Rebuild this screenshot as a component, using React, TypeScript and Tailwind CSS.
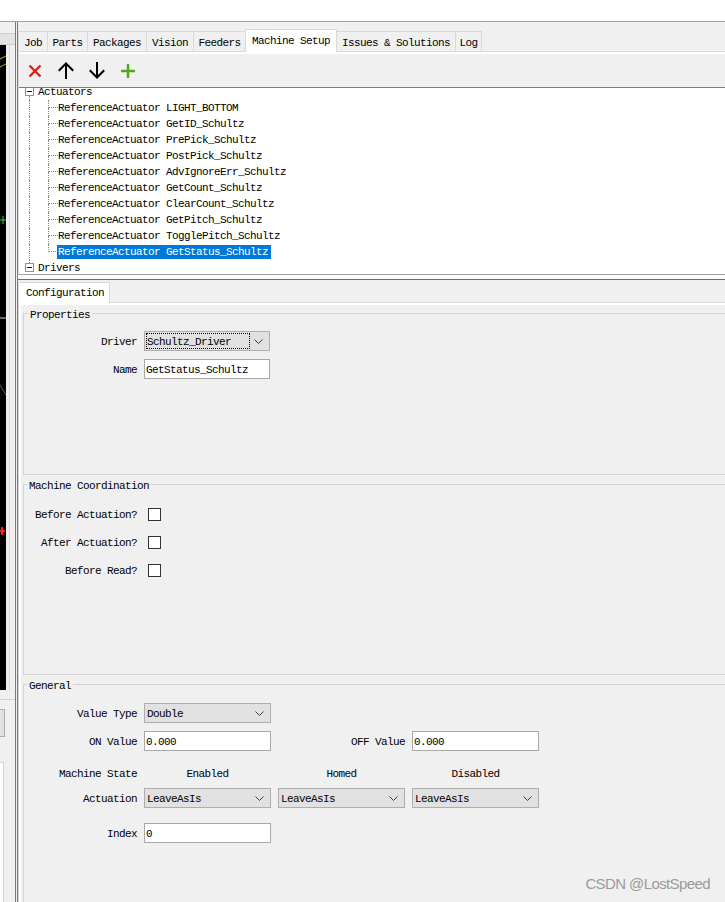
import React from "react";

const tabs = [
  { label: "Job", cls: "w-[29px]" },
  { label: "Parts", cls: "w-[40px]" },
  { label: "Packages", cls: "w-[59px]" },
  { label: "Vision", cls: "w-[47px]" },
  { label: "Feeders", cls: "w-[52px]" },
  { label: "Machine Setup", cls: "w-[92px]", sel: true },
  { label: "Issues & Solutions", cls: "w-[119px] -ml-px" },
  { label: "Log", cls: "w-[27px] border-r" },
];

const children = [
  "LIGHT_BOTTOM",
  "GetID_Schultz",
  "PrePick_Schultz",
  "PostPick_Schultz",
  "AdvIgnoreErr_Schultz",
  "GetCount_Schultz",
  "ClearCount_Schultz",
  "GetPitch_Schultz",
  "TogglePitch_Schultz",
  "GetStatus_Schultz",
];

function Chevron() {
  return (
    <svg width="9" height="5" viewBox="0 0 9 5" className="shrink-0">
      <path d="M0.5 0.5 L4.5 4.5 L8.5 0.5" fill="none" stroke="#3c3c3c" strokeWidth="1" />
    </svg>
  );
}

function Combo({ value, w, focus }: { value: string; w: string; focus?: boolean }) {
  return (
    <div className={`${w} h-[20px] shrink-0 border border-[#adadad] bg-[#e1e1e1] flex items-center`}>
      {focus ? (
        <div className="ml-[1px] w-[104px] h-[16px] border border-dotted border-black pt-px leading-[14px]">
          {value}
        </div>
      ) : (
        <div className="flex-1 pl-[2px] pt-[2px]">{value}</div>
      )}
      {focus && <div className="flex-1" />}
      <div className="mr-[6px]">
        <Chevron />
      </div>
    </div>
  );
}

function Field({ value, w }: { value: string; w: string }) {
  return (
    <div className={`${w} h-[20px] shrink-0 border border-[#a8a8a8] bg-white flex items-center pl-[1px]`}>
      <div className="pt-[2px]">{value}</div>
    </div>
  );
}

function Label({ text, w }: { text: string; w: string }) {
  return <div className={`${w} shrink-0 text-right pt-[2px] whitespace-pre`}>{text}</div>;
}

function Check() {
  return <div className="w-[13px] h-[13px] border border-[#333333] bg-white shrink-0" />;
}

function ExpandBox() {
  return (
    <div className="w-[9px] h-[9px] border border-[#919191] bg-white flex items-center justify-center shrink-0">
      <div className="w-[5px] h-px bg-[#1a1a1a]" />
    </div>
  );
}

function ChildRow({ name, last }: { name: string; last?: boolean }) {
  return (
    <div className="flex h-[16px]">
      <div className="w-[10px] shrink-0" />
      <div className="w-[19px] shrink-0 border-l border-dotted border-[#8c8c8c]" />
      <div className="w-[10px] shrink-0 flex flex-col">
        <div className="h-[8px] border-l border-b border-dotted border-[#8c8c8c]" />
        {!last && <div className="h-[8px] border-l border-dotted border-[#8c8c8c]" />}
      </div>
      {last ? (
        <span className="self-center h-[14px] leading-[14px] bg-[#0078d7] text-white -ml-px pl-px pr-[3px] whitespace-pre">
          ReferenceActuator {name}
        </span>
      ) : (
        <span className="whitespace-pre">ReferenceActuator {name}</span>
      )}
    </div>
  );
}

function UpIcon() {
  return (
    <svg width="18" height="17" viewBox="0 0 18 17">
      <path d="M9 1.5 V17 M1.8 8.7 L9 1.5 L16.2 8.7" fill="none" stroke="#000" strokeWidth="2" />
    </svg>
  );
}

function DownIcon() {
  return (
    <svg width="18" height="17" viewBox="0 0 18 17">
      <path d="M9 0 V15.5 M1.8 8.3 L9 15.5 L16.2 8.3" fill="none" stroke="#000" strokeWidth="2" />
    </svg>
  );
}

function DeleteIcon() {
  return (
    <svg width="16" height="16" viewBox="0 0 16 16">
      <path d="M2.5 2.5 L13.5 13.5 M13.5 2.5 L2.5 13.5" fill="none" stroke="#dc2020" strokeWidth="2.4" />
    </svg>
  );
}

function AddIcon() {
  return (
    <svg width="16" height="16" viewBox="0 0 16 16">
      <path d="M8 1 V15 M1 8 H15" fill="none" stroke="#4ea61c" strokeWidth="2.4" />
    </svg>
  );
}

function LeftStrip() {
  return (
    <div className="w-[15px] shrink-0 flex flex-col">
      <div className="h-[11px]" />
      <div className="h-[12px] bg-[#e3e3e3] border-t border-b border-[#cfcfcf]" />
      <div className="h-[645px] flex">
        <div className="w-[6px] bg-black">
          <svg width="6" height="645" viewBox="0 0 6 645">
            <path d="M0 14 Q4 12 6 11" stroke="#c8c84a" strokeWidth="1" fill="none" />
            <path d="M0 22 Q4 20 6 19" stroke="#b0b040" strokeWidth="1" fill="none" />
            <path d="M0 175 H6 M3 171 V179" stroke="#30d030" strokeWidth="1" />
            <path d="M0 273 H6" stroke="#d0d0d0" strokeWidth="1" />
            <path d="M0 340 Q3 345 6 350" stroke="#606060" strokeWidth="1" fill="none" />
            <path d="M0 486 H5 M2 482 V490" stroke="#ff2020" strokeWidth="2" />
          </svg>
        </div>
        <div className="w-[3px]" />
        <div className="w-px bg-[#dadada]" />
      </div>
      <div className="h-[10px] border-b border-[#d5d5d5]" />
      <div className="h-[9px]" />
      <div className="h-[28px] w-[5px] bg-[#e1e1e1] border border-l-0 border-[#adadad]" />
      <div className="h-[25px]" />
      <div className="flex-1 w-[4px] bg-white border-t border-r border-[#d5d5d5]" />
    </div>
  );
}

export default function App() {
  return (
    <div className="relative w-[725px] h-[902px] overflow-hidden bg-[#f0f0f0] flex flex-col font-['Liberation_Mono',monospace] text-[11px] leading-[16px] tracking-[-0.6px] text-black">
      <div className="h-[22px] shrink-0 bg-white border-b border-[#a0a0a0]" />
      <div className="flex flex-1 min-h-0">
        <LeftStrip />
        <div className="w-[3px] shrink-0 border-l border-r border-[#7a7a7a]" />
        <div className="flex-1 min-w-0 flex flex-col">
          {/* main tabs */}
          <div className="h-[29px] shrink-0 flex items-end">
            {tabs.map((t) =>
              t.sel ? (
                <div
                  key={t.label}
                  className={`${t.cls} h-[23px] -mb-px relative z-10 bg-white border-l border-r border-t border-[#d9d9d9] text-center pt-[3px] whitespace-pre`}
                >
                  {t.label}
                </div>
              ) : (
                <div
                  key={t.label}
                  className={`${t.cls} h-[20px] border-l border-t border-[#d9d9d9] text-center pt-[3px] whitespace-pre`}
                >
                  {t.label}
                </div>
              )
            )}
          </div>
          {/* upper pane */}
          <div className="shrink-0 border-t border-l border-[#d9d9d9] flex flex-col">
            <div className="h-[2px] bg-white" />
            <div className="h-[33px] flex items-center">
              <div className="w-[31px] h-full flex items-center justify-center">
                <DeleteIcon />
              </div>
              <div className="w-[31px] h-full flex items-center justify-center">
                <UpIcon />
              </div>
              <div className="w-[31px] h-full flex items-center justify-center">
                <DownIcon />
              </div>
              <div className="w-[31px] h-full flex items-center justify-center">
                <AddIcon />
              </div>
            </div>
            <div className="h-[188px] bg-white border-t border-t-[#7c7c7c] border-b border-b-[#a0a0a0] overflow-hidden">
              <div className="-mt-[4px] flex flex-col">
                <div className="flex h-[16px]">
                  <div className="w-[6px] shrink-0" />
                  <div className="w-[9px] shrink-0 flex flex-col">
                    <div className="h-[3px]" />
                    <ExpandBox />
                    <div className="flex-1 ml-[4px] border-l border-dotted border-[#8c8c8c]" />
                  </div>
                  <div className="w-[4px] shrink-0" />
                  <span>Actuators</span>
                </div>
                {children.map((c, i) => (
                  <ChildRow key={c} name={c} last={i === children.length - 1} />
                ))}
                <div className="flex h-[16px]">
                  <div className="w-[6px] shrink-0" />
                  <div className="w-[9px] shrink-0 flex flex-col">
                    <div className="h-[3px] ml-[4px] border-l border-dotted border-[#8c8c8c]" />
                    <ExpandBox />
                  </div>
                  <div className="w-[4px] shrink-0" />
                  <span>Drivers</span>
                </div>
              </div>
            </div>
          </div>
          <div className="h-[4px] shrink-0 bg-[#fafafa]" />
          <div className="h-px shrink-0 bg-[#6d6d6d]" />
          {/* lower pane */}
          <div className="flex-1 min-h-0 flex flex-col">
            <div className="pt-[2px] flex shrink-0">
              <div className="w-[92px] h-[21px] -mb-px relative z-10 bg-white border-l border-r border-t border-[#d9d9d9] pl-[7px] pt-[2px]">
                Configuration
              </div>
            </div>
            <div className="flex-1 border-t border-l border-[#d9d9d9]">
              <div className="h-full border-t-2 border-l-2 border-white pl-[2px] flex flex-col">
                {/* Properties */}
                <fieldset className="h-[170px] shrink-0 border border-r-0 border-[#d5d5d5]">
                  <legend className="ml-[4px] px-[2px] h-[16px] pt-[4px] leading-[12px]">Properties</legend>
                  <div className="pt-[10px] flex flex-col gap-[8px]">
                    <div className="flex items-center gap-[7px]">
                      <Label text="Driver" w="w-[113px]" />
                      <Combo value="Schultz_Driver" w="w-[126px]" focus />
                    </div>
                    <div className="flex items-center gap-[7px]">
                      <Label text="Name" w="w-[113px]" />
                      <Field value="GetStatus_Schultz" w="w-[126px]" />
                    </div>
                  </div>
                </fieldset>
                {/* Machine Coordination */}
                <fieldset className="mt-[1px] h-[199px] shrink-0 border border-r-0 border-[#d5d5d5]">
                  <legend className="ml-[3px] px-[2px] h-[16px] pt-[5px] leading-[11px]">Machine Coordination</legend>
                  <div className="pt-[12px] flex flex-col gap-[8px]">
                    {["Before Actuation?", "After Actuation?", "Before Read?"].map((l) => (
                      <div key={l} className="h-[20px] flex items-center">
                        <Label text={l} w="w-[113px]" />
                        <div className="ml-[11px]">
                          <Check />
                        </div>
                      </div>
                    ))}
                  </div>
                </fieldset>
                {/* General */}
                <fieldset className="mt-[1px] h-[260px] shrink-0 border border-r-0 border-[#d5d5d5]">
                  <legend className="ml-[3px] px-[2px] h-[16px] pt-[5px] leading-[11px]">General</legend>
                  <div className="pt-[11px] flex flex-col">
                    <div className="flex items-center gap-[7px]">
                      <Label text="Value Type" w="w-[113px]" />
                      <Combo value="Double" w="w-[127px]" />
                    </div>
                    <div className="mt-[8px] flex items-center gap-[7px]">
                      <Label text="ON Value" w="w-[113px]" />
                      <Field value="0.000" w="w-[127px]" />
                      <Label text="OFF Value" w="w-[127px]" />
                      <Field value="0.000" w="w-[127px]" />
                    </div>
                    <div className="mt-[12px] h-[20px] flex items-center gap-[7px]">
                      <Label text="Machine State" w="w-[113px]" />
                      <div className="w-[127px] text-center pt-[2px]">Enabled</div>
                      <div className="w-[127px] text-center pt-[2px]">Homed</div>
                      <div className="w-[127px] text-center pt-[2px]">Disabled</div>
                    </div>
                    <div className="mt-[5px] flex items-center gap-[7px]">
                      <Label text="Actuation" w="w-[113px]" />
                      <Combo value="LeaveAsIs" w="w-[127px]" />
                      <Combo value="LeaveAsIs" w="w-[127px]" />
                      <Combo value="LeaveAsIs" w="w-[127px]" />
                    </div>
                    <div className="mt-[15px] flex items-center gap-[7px]">
                      <Label text="Index" w="w-[113px]" />
                      <Field value="0" w="w-[127px]" />
                    </div>
                  </div>
                </fieldset>
              </div>
            </div>
          </div>
        </div>
      </div>
      <div className="absolute right-[15px] bottom-[10px] font-['Liberation_Sans',sans-serif] text-[15px] leading-[16px] text-[#9a9a9a]">
        CSDN @LostSpeed
      </div>
    </div>
  );
}
